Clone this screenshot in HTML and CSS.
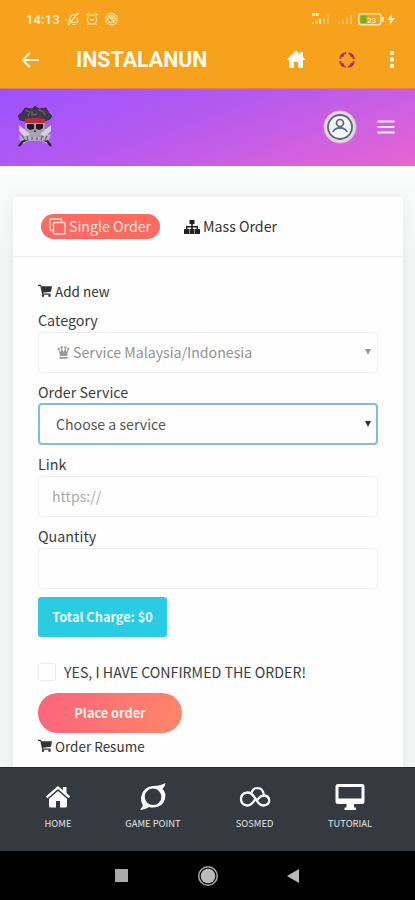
FILE: index.html
```html
<!DOCTYPE html>
<html lang="en">
<head>
<meta charset="utf-8">
<meta name="viewport" content="width=device-width, initial-scale=1">
<title>INSTALANUN</title>
<link rel="stylesheet" href="styles.css">
</head>
<body>
<svg class="defs" width="0" height="0" aria-hidden="true">
  <symbol id="cart" viewBox="0 0 14 13">
    <path d="M0 .8h2.800l.6 1.500H14l-1 5.400-8 1 .3.8h7.400v1.200H4.200L2.300 2H0z" fill="currentColor"/>
    <circle cx="5" cy="11.700" r="1.200" fill="currentColor"/><circle cx="11.500" cy="11.700" r="1.200" fill="currentColor"/>
  </symbol>
</svg>
<div class="appbar">
  <div class="status">
    <span class="time">14:13</span>
    <svg class="status-icons" width="54" height="16" viewBox="0 0 54 16" fill="none" stroke="#ffe3a8" stroke-width="1.200">
      <path d="M3 10.500l2-1.500V7a4 4 0 0 1 6.500-2.500M12.500 6.500v5H6M7.500 13.500h3M1 7.500v2M13.500 2L3 14"/>
      <circle cx="27" cy="8.500" r="4.600"/><path d="M25 8l2 1.500 2-1.500M21.500 4.500l2.500-2.500M32.500 4.500L30 2M23.500 12.500l-1 1.500M30.500 12.500l1 1.500"/>
      <circle cx="46.500" cy="8" r="5.800" stroke-dasharray="2.500 .6"/><circle cx="46.500" cy="8" r="3.600"/><path d="M43.500 5l6 6M46 5l3 3"/>
    </svg>
    <svg class="signal" width="86" height="16" viewBox="0 0 86 16">
      <path d="M1 2h3v3H1zM4.500 2h3v3h-3z" fill="#fff0cf"/>
      <path d="M1 11h2v2H1zM4.500 9.500h2V13h-2z" fill="#fbc976"/><path d="M8 8h2v5H8z" fill="#fff3dc"/>
      <path d="M12 6h2v7h-2zM16 4h2v9h-2zM27 11h2v2h-2zM31 9h2v4h-2zM35 7h2v6h-2zM39 4h2v9h-2z" fill="#f8b654"/>
      <rect x="47.800" y="2.800" width="22" height="11" rx="2.500" fill="none" stroke="#ffe5ae" stroke-width="1.500"/>
      <path d="M70.500 6H73v4.500h-2.500z" fill="#ffe5ae"/><rect x="49.500" y="4.500" width="6" height="7.500" rx="1" fill="#65b91c"/>
      <text x="56" y="11.500">23</text>
      <path d="M81 2.500L76.500 9h3l-1 5L84 7h-3.500z" fill="#ffeec8"/>
    </svg>
  </div>
  <div class="toolbar">
    <svg class="back" width="19" height="18" viewBox="0 0 19 18" fill="none" stroke="#fff5dc" stroke-width="2"><path d="M9 1.500L1.800 9 9 16.500M2 9h16"/></svg>
    <h1>INSTALANUN</h1>
    <svg class="home" width="20" height="19" viewBox="0 0 20 19"><path d="M10 .5L.5 10H3v8h5v-6h4v6h5v-8h2.500L17 7V2h-2.500v2.500z" fill="#fffdf5"/></svg>
    <svg class="ring" width="18" height="18" viewBox="0 0 18 18" fill="none" stroke="#b53759" stroke-width="2"><circle cx="9" cy="9" r="7" stroke-dasharray="8.500 2.500" stroke-dashoffset="-1.300"/><path d="M3.500 3.500l2 2M14.500 3.500l-2 2M14.500 14.500l-2-2M3.500 14.500l2-2" stroke="#a32c72"/></svg>
    <svg class="dots" width="6" height="19" viewBox="0 0 6 19" fill="#fff8e5"><circle cx="3" cy="3" r="2.200"/><circle cx="3" cy="9.500" r="2.200"/><circle cx="3" cy="16" r="2.200"/></svg>
  </div>
</div>
<header class="banner">
  <svg class="logo" width="36" height="44" viewBox="0 0 36 44">
    <path d="M4 38L30 25M32 38L6 25" stroke="#ddd" stroke-width="3"/>
    <path d="M2 41l4-5 9-3M34 41l-4-5-9-3" stroke="#27242a" stroke-width="2.600" fill="none"/>
    <path d="M8 18h20v9l-3 3v4l-4 2h-7l-4-3v-4l-2-2z" fill="#aaa6ae"/>
    <path d="M1 11Q5 8 8 3l7 1 3-3 4 3 7-1q2 5 6 8l-2 3-5 2-9-2-11 2-5-1z" fill="#38373c" stroke="#222" stroke-width=".7"/>
    <path d="M8 5l5 2-2 4M21 5l5 1 2 4M15 6v4l5-1" stroke="#646168" stroke-width="1.300" fill="none"/>
    <path d="M8 14q10-2 20 0v4H8z" fill="#bb2832"/>
    <path d="M10 19h7v5l-4 1-3-2zM19 19h7v4l-3 2-4-1zM17 27l1-3 1 3z" fill="#17151a"/>
    <path d="M2 20l11 9-5 3-6-6zM34 20l-11 9 5 3 6-6z" fill="#dad6de"/>
    <path d="M2 29l4 3 5-2 4 3 5-2 5 2 4-3 5-1-2 6-7 1-5-1-6 1-6-1-5 1z" fill="#b7b3ba"/>
    <path d="M5 31l3 4M10 31l1 4M15 32v3M20 32v3M25 31l-1 4M30 31l-2 4" stroke="#555159" stroke-width="1"/>
  </svg>
  <svg class="avatar" width="34" height="34" viewBox="0 0 34 34"><circle cx="17" cy="17" r="16.200" fill="#dedbdd" stroke="#dca2bd" stroke-width=".7"/><circle cx="17" cy="17" r="12" fill="#f3f4f8" stroke="#596777" stroke-width="1.800"/><g fill="none" stroke="#596777" stroke-width="1.700"><circle cx="17" cy="13" r="3.500"/><path d="M9.800 22q2-4.200 7.200-4.200t7.200 4.200"/></g></svg>
  <svg class="menu" width="18" height="14" viewBox="0 0 18 14" stroke="#f9edff" stroke-width="1.900"><path d="M.5 1.500h17M.5 7h17M.5 12.500h17"/></svg>
</header>
<main>
  <section class="card">
    <nav class="tabs">
      <a class="tab active"><svg width="17" height="17" viewBox="0 0 17 17" fill="none" stroke="#ffe3dc" stroke-width="1.300"><path d="M4 12.500H1.500L1 12V1.500L1.500 1H12l.5.500V4"/><rect x="4.500" y="4.500" width="11.500" height="11.500" rx="1"/></svg><span>Single Order</span></a>
      <a class="tab"><svg width="16" height="14" viewBox="0 0 16 14"><path d="M5.500 0h5v4H8.800v2H14v3h2v5h-5V9h1.500V7.500H8.800V9h1.700v5h-5V9h1.700V7.500H3.500V9H5v5H0V9h2V6h5.200V4H5.500z" fill="#222"/></svg><span>Mass Order</span></a>
    </nav>
    <form class="form">
      <div class="heading"><svg width="14" height="13"><use href="#cart"/></svg><span>Add new</span></div>
      <div class="group"><label>Category</label>
        <div class="field select muted"><svg width="13" height="13" viewBox="0 0 12 13" fill="#999"><circle cx="1.200" cy="3" r="1.200"/><circle cx="4.200" cy="1.500" r="1.200"/><circle cx="7.800" cy="1.500" r="1.200"/><circle cx="10.800" cy="3" r="1.200"/><path d="M1 3l2 3 1-4 2 4 2-4 1 4 2-3-1.500 7h-7zM2 11h8v1.700H2z"/></svg><span>Service Malaysia/Indonesia</span><i class="caret"></i></div></div>
      <div class="group"><label>Order Service</label>
        <div class="field select focus"><span>Choose a service</span><i class="caret"></i></div></div>
      <div class="group"><label>Link</label>
        <div class="field hint"><span>https://</span></div></div>
      <div class="group"><label>Quantity</label><div class="field"></div></div>
      <div class="charge"><span>Total Charge: $0</span></div>
      <div class="confirm"><i class="box"></i><span>YES, I HAVE CONFIRMED THE ORDER!</span></div>
      <div class="place"><span>Place order</span></div>
      <div class="heading resume"><svg width="14" height="13"><use href="#cart"/></svg><span>Order Resume</span></div>
    </form>
  </section>
</main>
<nav class="bottom">
  <a><svg width="26" height="28" viewBox="0 0 26 28" fill="#fff"><path d="M13 3L.8 13.500l1.600 1.700L13 6l10.600 9.200 1.600-1.700L21.500 10V4H18v3.200z"/><path d="M13 8l-9 7.800V23q0 1.500 1.500 1.500H11V18h4v6.500h5.500q1.500 0 1.500-1.500v-7.200z"/></svg><span>HOME</span></a>
  <a><svg width="28" height="28" viewBox="0 0 28 28"><path d="M26.500 0q-.5 3.500-3 6 4 4 2.500 10-2.500 8.500-12 8.500-2.500 0-4-.5-4 3-9 3l3-4.500Q1 18 2.500 12.500 5 3.500 14 3q7.500-.2 12.500-3zM14 5.500a8.300 8.300 0 1 0 .1 16.600A8.300 8.300 0 0 0 14 5.500z" fill="#fff" fill-rule="evenodd"/></svg><span>GAME POINT</span></a>
  <a><svg width="32" height="28" viewBox="0 0 32 28" fill="none" stroke="#fff" stroke-width="2.300"><path d="M16 16.500Q12.500 22.500 8.500 22.500 2 22 2 16q.2-6 6.500-6.500 3.500 0 6 3.500l5 7q2 2.500 5 2.500 5.500-.5 5.700-5-.2-4.500-5.200-5-3 0-5 2.500L17.500 17.500"/><path d="M12.500 9.500Q14.500 5 18.500 5q5.500.2 6.300 7" stroke-width="2.100"/></svg><span>SOSMED</span></a>
  <a><svg width="32" height="28" viewBox="0 0 32 28"><path d="M4 1h24q2.500 0 2.500 2.500v15q0 2.500-2.500 2.500h-8v3.500h2V27H10.500v-2.500h2V21H4Q1.500 21 1.500 18.500v-15Q1.500 1 4 1zM4.500 4v11.500h23V4z" fill="#fff" fill-rule="evenodd"/></svg><span>TUTORIAL</span></a>
</nav>
<footer class="sysnav">
  <i class="square"></i>
  <svg width="22" height="22" viewBox="0 0 22 22"><circle cx="11" cy="11" r="9.300" fill="none" stroke="#aaa" stroke-width="1.500"/><circle cx="11" cy="11" r="7.300" fill="#bbb"/></svg>
  <i class="triangle"></i>
</footer>
</body>
</html>
```
FILE: styles.css
```css
* { box-sizing: border-box; }
body {
  margin: 0;
  width: 415px;
  height: 900px;
  overflow: hidden;
  display: flex;
  flex-direction: column;
  background: #f7f9f9;
  font-family: "Noto Sans CJK SC", "Noto Sans", sans-serif;
  color: #3d3d3d;
}
svg { display: block; flex: none; }
.defs { position: absolute; }
span { white-space: nowrap; }

.appbar { height: 89px; flex: none; background: #f6a21c; border-bottom: 1px solid #e17a55; font-family: Roboto, sans-serif; }
.status { display: flex; align-items: center; height: 38px; padding-left: 26px; }
.time { width: 39px; font-size: 13px; font-weight: 500; color: #fff0cd; letter-spacing: .15px; }
.signal { margin-left: 192px; }
.signal text { font: 500 8px Roboto, sans-serif; fill: #ffe9b5; }
.toolbar { display: flex; align-items: center; height: 43px; padding-left: 21px; }
h1 { margin: 0 0 0 36px; width: 210px; font-size: 21.400px; line-height: 28px; font-weight: 700; color: #fffaf0; }
.ring { margin-left: 32px; }
.dots { margin-left: 33px; }

.banner { display: flex; align-items: center; height: 77px; flex: none; padding: 0 0 2px 17px; background: linear-gradient(160deg, #9b52ff 0%, #b65aef 45%, #e665d2 100%); }
.logo { opacity: .94; }
.avatar { margin-left: 270px; }
.menu { margin-left: 20px; }

main { flex: 1; min-height: 0; overflow: hidden; padding: 31px 12px 0 13px; background: linear-gradient(#fdfefe, #f8faf9 28px, #f3f5f5 90px); }
.card { height: 580px; background: #fefefe; border-radius: 3px; box-shadow: 0 0 10px rgba(80, 95, 95, .09); }
.tabs { display: flex; align-items: center; height: 60px; padding-left: 28px; border-bottom: 1px solid #ededed; }
.tab { display: flex; align-items: center; height: 25px; font-size: 14.200px; line-height: 23px; color: #333; }
.tab.active { width: 119px; padding-left: 8px; margin-right: 24px; border-radius: 13px; background: #fc6a60; color: #ffe6e0; }
.tab span { margin-left: 3px; padding-bottom: 1px; }

.form { padding: 23px 25px 0; }
.heading { display: flex; align-items: center; height: 20px; font-size: 13.500px; gap: 3px; color: #333; }
.heading span { padding-top: 1px; }
.group { height: 72px; }
.heading + .group { margin-top: 8px; }
label { display: block; height: 24px; font-size: 14.300px; line-height: 23px; color: #3c3c3c; }
.field { display: flex; align-items: center; height: 41px; padding: 0 0 1px 13px; border: 1px solid #f0f0f0; border-radius: 4px; font-size: 14.150px; }
.select { padding: 0 6px 1px 18px; }
.muted { color: #929292; gap: 3px; }
.hint { color: #aaa; }
.focus { height: 42px; margin-top: -1px; border: 2px solid #81bed7; padding: 0 5px 0 16px; color: #555; }
.caret { margin-left: auto; border: 3px solid transparent; border-top: 6px solid currentColor; border-bottom: 0; }
.focus .caret { color: #333; }
.charge { display: flex; align-items: center; justify-content: center; width: 129px; height: 40px; margin-top: 1px; padding-bottom: 1px; border-radius: 3px; background: #2acbe3; color: #eaffff; font-size: 12.750px; font-weight: 700; }
.confirm { display: flex; align-items: center; height: 20px; margin-top: 25px; font-size: 14.200px; color: #3c3c3c; }
.box { width: 18px; height: 18px; margin-right: 8px; border: 1px solid #ececec; border-radius: 3px; }
.place { display: flex; align-items: center; justify-content: center; width: 144px; height: 40px; margin-top: 11px; padding-bottom: 1px; border-radius: 20px; background: linear-gradient(110deg, #fc637d, #fd8768); color: #fff0eb; font-size: 12.750px; font-weight: 700; }
.resume { margin-top: 2px; }

.bottom { display: grid; grid-template-columns: 84px 106px 97px 94px; height: 84px; flex: none; padding: 15px 17px 0 16px; background: #343a40; border-top: 1px solid #1e2a2e; }
.bottom a { display: flex; flex-direction: column; align-items: center; color: #e5e5e5; font-size: 9.400px; line-height: 12px; }
.bottom span { margin-top: 6px; }
.sysnav { display: flex; align-items: center; height: 49px; flex: none; padding-left: 115px; background: #000; }
.square { width: 13px; height: 13px; background: #aaa; }
.sysnav svg { margin-left: 69px; }
.triangle { margin-left: 68px; border: 7px solid transparent; border-right: 12px solid #bbb; border-left: 0; }
```
